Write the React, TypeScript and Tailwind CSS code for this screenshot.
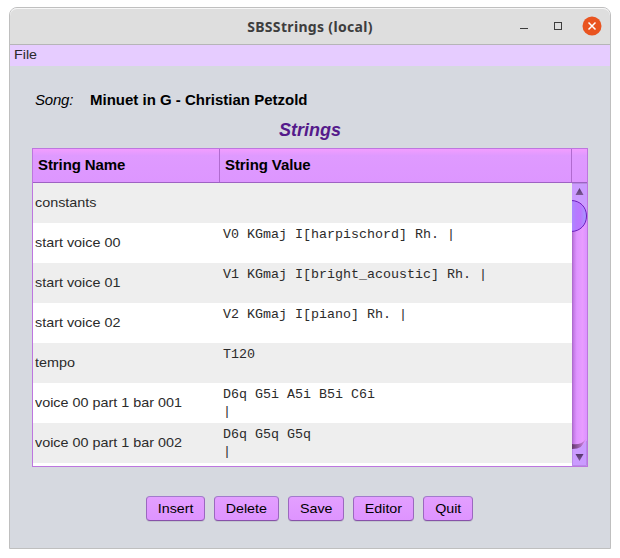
import React from "react";

const rows: { name: string; value: string[] }[] = [
  { name: "constants", value: [] },
  { name: "start voice 00", value: ["V0 KGmaj I[harpischord] Rh. |"] },
  { name: "start voice 01", value: ["V1 KGmaj I[bright_acoustic] Rh. |"] },
  { name: "start voice 02", value: ["V2 KGmaj I[piano] Rh. |"] },
  { name: "tempo", value: ["T120"] },
  { name: "voice 00 part 1 bar 001", value: ["D6q G5i A5i B5i C6i", "|"] },
  { name: "voice 00 part 1 bar 002", value: ["D6q G5q G5q", "|"] },
];

function TitleBar() {
  return (
    <header className="grid h-[37px] shrink-0 grid-cols-[1fr_auto_1fr] items-center rounded-t-[7px] border-b border-[#b5b5b7] bg-[#dedede] shadow-[inset_0_1px_0_#f7f7f7]">
      <span />
      <h1 className="pt-px font-['Noto_Sans',sans-serif] text-[14px] leading-[18px] font-bold tracking-[0.33px] text-[#3d3d3d]">
        SBSStrings (local)
      </h1>
      <div className="flex h-full justify-end">
        <svg width="92" height="36" viewBox="0 0 92 36" className="text-[#3d3d3d]">
          <path d="M2 20.5h8" stroke="currentColor" />
          <rect x="36.5" y="14.5" width="7" height="7" fill="none" stroke="currentColor" />
          <circle cx="74" cy="18" r="9.5" fill="#e95420" />
          <path d="M70.5 14.5l7 7m0-7l-7 7" stroke="#fff" strokeWidth="1.5" />
        </svg>
      </div>
    </header>
  );
}

function ScrollBar() {
  return (
    <svg width="15" height="283" viewBox="0 0 15 283" className="shrink-0">
      <defs>
        <linearGradient id="track">
          <stop offset="0" stopColor="#a667c5" />
          <stop offset=".12" stopColor="#c67ce8" />
          <stop offset=".32" stopColor="#df94ff" />
          <stop offset=".7" stopColor="#e89cff" />
          <stop offset="1" stopColor="#dc92ff" />
        </linearGradient>
        <linearGradient id="thumb">
          <stop offset="0" stopColor="#a98aff" />
          <stop offset=".35" stopColor="#b679ff" />
          <stop offset=".6" stopColor="#bb76ff" />
          <stop offset="1" stopColor="#a698ff" />
        </linearGradient>
        <linearGradient id="shade" x1="0" x2="1">
          <stop offset="0" stopColor="#65366f" />
          <stop offset="1" stopColor="#d38ce9" />
        </linearGradient>
        <linearGradient id="arrow" x1="0" x2="0" y1="0" y2="1">
          <stop offset="0" stopColor="#55366c" />
          <stop offset="1" stopColor="#7b5795" />
        </linearGradient>
      </defs>
      <rect width="15" height="283" fill="url(#track)" />
      <path d="M0 0h15v28Q10 17 0 17z" fill="#cb9bff" />
      <path d="M0 .5h15" stroke="#b58be0" />
      <path d="M3.5 12L7.5 5l4 7z" fill="url(#arrow)" />
      <path d="M-1 17.5C8 17.5 14.5 24 14.5 33S8 48.5-1 48.5z" fill="url(#thumb)" stroke="#6b20bd" />
      <path d="M0 261C5 262 10 261 14 256L8 266H0z" fill="url(#shade)" />
      <path d="M0 266Q11 266 15 256v27H0z" fill="#cb9bff" />
      <path d="M.5 266v16.5h14V258" fill="none" stroke="#b88be9" />
      <path d="M3.5 271h8l-4 7z" fill="url(#arrow)" />
    </svg>
  );
}

function StringTable() {
  return (
    <section className="mx-[22px] h-[319px] overflow-hidden border border-[#bd76df] bg-white">
      <div className="flex h-[34px] border-b border-[#9e62c3] bg-linear-to-b from-[#f29dff] via-[#df9aff] via-20% to-[#dd96ff] text-[15px] leading-[32px] font-bold tracking-[-0.09px] text-black">
        <div className="w-[187px] border-r border-[#b06bcf] pl-[5px]">String Name</div>
        <div className="w-[352px] border-r border-[#b06bcf] pl-[5px]">String Value</div>
      </div>
      <div className="flex h-[283px]">
        <div className="w-[539px]">
          {rows.map((row) => (
            <div key={row.name} className="flex h-10 odd:bg-[#eee] even:bg-white">
              <div className="w-[188px] pl-[2px] text-[13.333px] leading-[39px] text-[#2b2b2b]">
                <span className="inline-block origin-left scale-x-[1.078]">{row.name}</span>
              </div>
              <div className="pt-[3px] pl-[2px] font-['Liberation_Mono',monospace] text-[13.333px] leading-[17px] whitespace-pre text-[#2b2b2b]">
                {row.value.map((line) => (
                  <div key={line}>{line}</div>
                ))}
              </div>
            </div>
          ))}
        </div>
        <ScrollBar />
      </div>
    </section>
  );
}

function Button({ label, width }: { label: string; width: string }) {
  return (
    <button
      className={`${width} h-[25px] rounded-[4px] border border-t-[#a27bcc] border-r-[#9b68bf] border-b-[#8752a8] border-l-[#9b68bf] bg-linear-to-b from-[#e39fff] to-[#de94ff] text-center text-[13.333px] leading-[21px] text-black shadow-[0_1px_0_#c4c6d0]`}
    >
      <span className="inline-block scale-x-[1.07]">{label}</span>
    </button>
  );
}

export default function App() {
  return (
    <div className="h-[558px] w-[620px] overflow-hidden bg-white pt-[7px] pl-[9px] font-['Liberation_Sans',Arial,sans-serif]">
      <main className="flex h-[542px] w-[602px] flex-col rounded-t-lg border border-[#bfbfbf] bg-[#d6d9e0]">
        <TitleBar />
        <nav className="h-[21px] shrink-0 bg-[#e6ccff] pl-1 text-[13.333px] leading-[19px] text-[#2b2b2b]">
          <span className="inline-block origin-left scale-x-[1.07]">File</span>
        </nav>
        <div className="mt-[24px] flex h-[20px] pl-[25px] text-[15px] leading-[20px] text-black">
          <span className="w-[55px] tracking-[-0.2px] italic">Song:</span>
          <span className="font-bold">Minuet in G - Christian Petzold</span>
        </div>
        <h2 className="mt-[10px] h-[20px] text-center text-[18px] leading-[20px] font-bold text-[#551a8b] italic">
          Strings
        </h2>
        <div className="mt-[8px]">
          <StringTable />
        </div>
        <div className="mt-[29px] flex gap-[9px] pl-[136px]">
          <Button label="Insert" width="w-[59px]" />
          <Button label="Delete" width="w-[65px]" />
          <Button label="Save" width="w-[56px]" />
          <Button label="Editor" width="w-[61px]" />
          <Button label="Quit" width="w-[50px]" />
        </div>
      </main>
    </div>
  );
}
